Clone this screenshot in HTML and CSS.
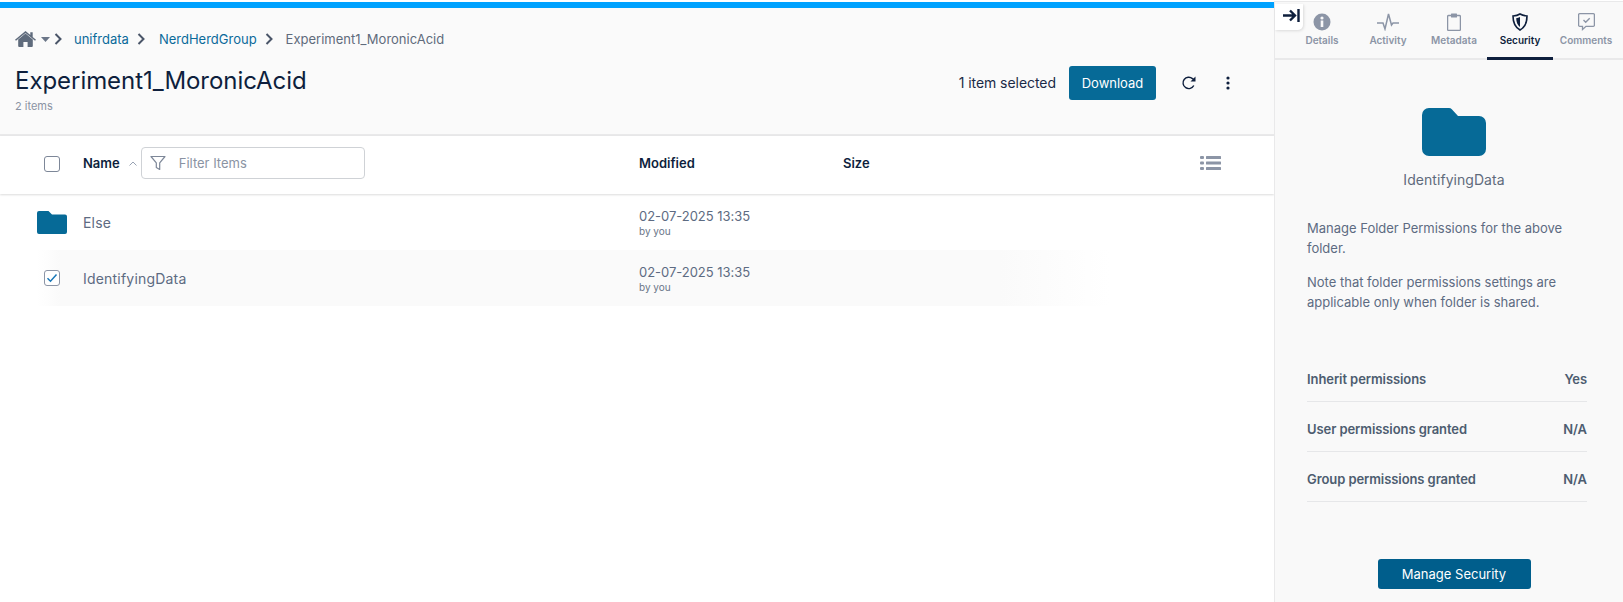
FILE: index.html
```html
<!DOCTYPE html>
<html lang="en">
<head>
<meta charset="utf-8">
<title>Experiment1_MoronicAcid</title>
<link rel="stylesheet" href="styles.css">
</head>
<body>
<div class="app">
  <main class="main">
    <div class="progress"></div>
    <header class="header">
      <nav class="crumbs">
        <svg class="home" width="21" height="17" viewBox="0 0 21 17"><path fill="#5f6b7c" d="M10.5 2.4 3.2 8.6V15a1 1 0 0 0 1 1h4.2v-5h4.2v5h4.2a1 1 0 0 0 1-1V8.6z"/><path fill="#5f6b7c" d="M10.5 0 0 8.7l1 1.1 9.5-7.800 9.5 7.800 1-1.100-3.300-2.800V1.200h-2.400v2.700z"/></svg>
        <svg class="caret" width="9" height="5" viewBox="0 0 9 5"><path fill="#6b7688" d="M0 0h9L4.500 5z"/></svg>
        <svg class="chev first" width="8" height="12" viewBox="0 0 8 12"><path fill="none" stroke="#4a5568" stroke-width="2" d="m1.500 1 5 5-5 5"/></svg>
        <a class="crumb-link">unifrdata</a>
        <svg class="chev" width="8" height="12" viewBox="0 0 8 12"><path fill="none" stroke="#4a5568" stroke-width="2" d="m1.500 1 5 5-5 5"/></svg>
        <a class="crumb-link">NerdHerdGroup</a>
        <svg class="chev" width="8" height="12" viewBox="0 0 8 12"><path fill="none" stroke="#4a5568" stroke-width="2" d="m1.500 1 5 5-5 5"/></svg>
        <span class="crumb-current">Experiment1_MoronicAcid</span>
      </nav>
      <div class="title-row">
        <div>
          <h1 class="title">Experiment1_MoronicAcid</h1>
          <div class="count">2 items</div>
        </div>
        <div class="actions">
          <span class="selected">1 item selected</span>
          <button class="btn btn-download">Download</button>
          <svg class="refresh" width="16" height="16" viewBox="0 0 16 16"><path fill="none" stroke="#0e1f3d" stroke-width="1.400" d="M12.800 10.500A5.700 5.700 0 1 1 11.500 3.600L13.500 5"/><path fill="#0e1f3d" d="M14.500 1.500v5h-5z"/></svg>
          <svg class="kebab" width="4" height="14" viewBox="0 0 4 14"><circle cx="2" cy="2" r="1.600" fill="#0e1f3d"/><circle cx="2" cy="7" r="1.600" fill="#0e1f3d"/><circle cx="2" cy="12" r="1.600" fill="#0e1f3d"/></svg>
        </div>
      </div>
    </header>
    <div class="table-head grid">
      <div class="cell-check"><span class="checkbox head-box"></span></div>
      <div class="cell-name">
        <span class="th">Name</span>
        <svg class="sort" width="8" height="5" viewBox="0 0 8 5"><path fill="none" stroke="#98a2b3" stroke-width="1" d="m.5 4.500 3.500-3.500 3.500 3.500"/></svg>
        <label class="filter">
          <svg width="16" height="16" viewBox="0 0 16 16"><path fill="none" stroke="#7d8798" stroke-width="1.200" d="M1 1.500h14L9.700 7.800v6.700l-3.400-2V7.800z" stroke-linejoin="round"/></svg>
          <span class="filter-text">Filter Items</span>
        </label>
      </div>
      <div class="th">Modified</div>
      <div class="th">Size</div>
      <svg class="list-toggle" width="21" height="16" viewBox="0 0 21 16"><g fill="#8c95a6"><rect x="0" y="1" width="4" height="3" rx="1"/><rect x="0" y="6.500" width="4" height="3" rx="1"/><rect x="0" y="12" width="4" height="3" rx="1"/><rect x="6" y="1" width="15" height="3" rx=".5"/><rect x="6" y="6.500" width="15" height="3" rx=".5"/><rect x="6" y="12" width="15" height="3" rx=".5"/></g></svg>
    </div>
    <div class="row grid">
      <div class="cell-check folder-cell"><svg width="30" height="23" viewBox="0 0 30 23"><path fill="#066a97" d="M2 0h9.500l3.500 3.500h13a2 2 0 0 1 2 2V21a2 2 0 0 1-2 2H2a2 2 0 0 1-2-2V2a2 2 0 0 1 2-2z"/></svg></div>
      <div class="item-name">Else</div>
      <div class="modified"><div class="date">02-07-2025 13:35</div><div class="by">by you</div></div>
    </div>
    <div class="row grid row-selected">
      <div class="cell-check"><span class="checkbox checked"><svg width="12" height="10" viewBox="0 0 12 10"><path fill="none" stroke="#1877b8" stroke-width="1.500" d="m1.500 5.200 3 3 6-6.700"/></svg></span></div>
      <div class="item-name">IdentifyingData</div>
      <div class="modified"><div class="date">02-07-2025 13:35</div><div class="by">by you</div></div>
    </div>
  </main>
  <aside class="panel">
    <button class="collapse"><svg width="17" height="13" viewBox="0 0 17 13"><path fill="none" stroke="#0e1f3d" stroke-width="2.400" d="M0 6.500h11M7 1.500l5 5-5 5M15.500 0v13"/></svg></button>
    <div class="tabs">
      <div class="tab">
        <svg width="18" height="18" viewBox="0 0 18 18"><circle cx="9" cy="9" r="8.500" fill="#8c95a6"/><rect x="7.700" y="7.500" width="2.600" height="6.500" fill="#f8f8f9"/><circle cx="9" cy="5" r="1.600" fill="#f8f8f9"/></svg>
        <span>Details</span>
      </div>
      <div class="tab">
        <svg width="22" height="18" viewBox="0 0 22 18"><path fill="none" stroke="#8c95a6" stroke-width="1.500" d="M0 10h6l2 6 3.500-15 3 11 1.500-2h6"/></svg>
        <span>Activity</span>
      </div>
      <div class="tab">
        <svg width="14" height="18" viewBox="0 0 14 18"><path fill="none" stroke="#8c95a6" stroke-width="1.300" d="M4 2.500H1.600a1 1 0 0 0-1 1v12.900a1 1 0 0 0 1 1h10.800a1 1 0 0 0 1-1V3.500a1 1 0 0 0-1-1H10"/><rect x="4" y=".5" width="6" height="4" rx=".5" fill="#8c95a6"/></svg>
        <span>Metadata</span>
      </div>
      <div class="tab active">
        <svg width="16" height="18" viewBox="0 0 16 18"><path fill="none" stroke="#0e1f3d" stroke-width="1.600" d="M8 1c2 1.200 4.500 1.800 7 2 0 6-1.500 11-7 14C2.500 14 1 9 1 3c2.500-.2 5-.8 7-2z"/><path fill="#0e1f3d" d="M8 4c1.200.6 2.500 1 3.800 1.200-.1 3.600-1 6.700-3.800 8.800z" transform="matrix(-1 0 0 1 16 0)"/></svg>
        <span>Security</span>
      </div>
      <div class="tab">
        <svg width="17" height="18" viewBox="0 0 17 18"><path fill="none" stroke="#8c95a6" stroke-width="1.300" d="M1.600.7h13.800a1 1 0 0 1 1 1v10.600a1 1 0 0 1-1 1H8L4.500 16.500v-3.200H1.600a1 1 0 0 1-1-1V1.700a1 1 0 0 1 1-1z"/><path fill="none" stroke="#8c95a6" stroke-width="1.400" d="m5.500 7 2.200 2.200 4-4"/></svg>
        <span>Comments</span>
      </div>
    </div>
    <div class="panel-body">
      <div class="folder-summary">
        <svg width="64" height="48" viewBox="0 0 64 48"><path fill="#066a97" d="M7 0h20a4 4 0 0 1 2.800 1.200L36 8h21a7 7 0 0 1 7 7v26a7 7 0 0 1-7 7H7a7 7 0 0 1-7-7V7a7 7 0 0 1 7-7z"/></svg>
        <div class="folder-name">IdentifyingData</div>
      </div>
      <p class="note">Manage Folder Permissions for the above folder.</p>
      <p class="note">Note that folder permissions settings are applicable only when folder is shared.</p>
      <dl class="props">
        <div class="prop"><dt>Inherit permissions</dt><dd>Yes</dd></div>
        <div class="prop"><dt>User permissions granted</dt><dd>N/A</dd></div>
        <div class="prop"><dt>Group permissions granted</dt><dd>N/A</dd></div>
      </dl>
      <div class="panel-action"><button class="btn btn-manage">Manage Security</button></div>
    </div>
  </aside>
</div>
</body>
</html>
```

FILE: styles.css
```css
* { box-sizing: border-box; }
html, body { margin: 0; height: 100%; overflow: hidden; }
body { font-family: Inter, "Liberation Sans", sans-serif; background: #fff; color: #0e1f3d; }
.app { display: flex; height: 602px; padding-top: 2px; }
.main { flex: 1; min-width: 0; display: flex; flex-direction: column; }
.progress { height: 6px; background: #00a2ff; }
.header { height: 128px; background: #fafafa; border-bottom: 2px solid #e9e9ea; padding: 22px 0 0 15px; }
.crumbs { display: flex; align-items: center; height: 18px; font-size: 13px; }
.caret { margin-left: 5px; }
.chev { margin: 0 14px 0 8px; }
.chev.first { margin: 0 12px 0 4px; }
.crumb-link { color: #0b6a9a; }
.crumb-current { color: #5f6b7c; margin-left: -1px; }
.title-row { display: flex; justify-content: space-between; margin-top: 16px; padding-right: 44px; }
.title { margin: 0; font-weight: 400; font-size: 24px; letter-spacing: -.05px; line-height: 34px; color: #0e1f3d; }
.count { font-size: 11px; color: #8a93a3; line-height: 14px; margin-top: 1px; }
.actions { display: flex; align-items: center; height: 34px; margin-top: 2px; }
.selected { font-size: 14px; letter-spacing: -.05px; color: #1a2a47; padding-bottom: 2px; }
.btn { border: 0; border-radius: 3px; color: #fff; font-family: inherit; font-size: 13px; padding: 0; }
.btn-download { width: 87px; height: 34px; background: #066a97; margin-left: 13px; }
.refresh { margin-left: 25px; }
.kebab { margin-left: 29px; }
.grid { display: grid; grid-template-columns: 83px 556px 204px 1fr auto; align-items: center; }
.table-head { height: 58px; box-shadow: 0 1px 2px rgba(0,0,0,.14); position: relative; padding: 0 53px 4px 0; }
.cell-check { display: flex; justify-content: center; padding-left: 30px; padding-right: 9px; }
.checkbox { width: 16px; height: 16px; border: 1px solid #7d8798; border-radius: 3px; background: #fff; display: flex; align-items: center; justify-content: center; }
.head-box { margin-top: 2px; }
.checked { border-color: #8c95a6; }
.cell-name { display: flex; align-items: center; }
.th { font-size: 13px; font-weight: 600; color: #0e1f3d; }
.sort { margin-left: 9px; }
.filter { width: 224px; height: 32px; margin-left: 4px; border: 1px solid #cfd2d6; border-radius: 4px; display: flex; align-items: center; padding: 0 0 0 8px; background: #fff; }
.filter-text { font-size: 13px; color: #8a93a3; margin-left: 13px; }
.row { height: 56px; }
.row-selected { background: linear-gradient(90deg, #fff 37px, #fafafa 60px, #fafafa 1000px, #fff 1110px); }
.folder-cell { padding: 0 0 0 37px; justify-content: flex-start; }
.item-name { font-size: 14px; letter-spacing: .2px; color: #5d6b82; }
.date { font-size: 13px; letter-spacing: -.03px; color: #5d6b82; line-height: 17px; padding-top: 1px; }
.by { font-size: 10px; color: #6b7688; line-height: 12px; }
.panel { width: 349px; flex: none; background: #f9f9f9; border-left: 1px solid #e9e9ea; border-top: 1px solid #e9e9ea; margin-top: -1px; position: relative; display: flex; flex-direction: column; }
.collapse { position: absolute; left: 0; top: 2px; width: 28px; height: 26px; padding: 0 0 4px 4px; border: 0; border-radius: 0 0 5px 0; background: #fff; box-shadow: 1px 1px 3px rgba(0,0,0,.12); display: flex; align-items: center; justify-content: center; }
.tabs { height: 58px; display: grid; grid-template-columns: repeat(5, 66px); padding-left: 14px; border-bottom: 2px solid #e9e9ea; }
.tab { display: flex; flex-direction: column; align-items: center; gap: 3px; padding-top: 11px; font-size: 10px; font-weight: 600; color: #8c95a6; height: 58px; white-space: nowrap; }
.tab svg { height: 18px; flex: none; }
.tab.active { color: #0e1f3d; border-bottom: 3px solid #0e1f3d; }
.panel-body { flex: 1; padding: 48px 36px 0 32px; display: flex; flex-direction: column; }
.folder-summary { display: flex; flex-direction: column; align-items: center; padding-left: 14px; }
.folder-name { font-size: 14px; letter-spacing: .05px; color: #5f6b7c; margin-top: 15px; line-height: 17px; }
.note { margin: 0 0 14px; font-size: 13px; line-height: 20px; color: #5d6b82; }
.folder-summary + .note { margin-top: 30px; }
.props { margin: 26px 0 0; }
.prop { display: flex; justify-content: space-between; align-items: center; height: 50px; padding-top: 4px; border-bottom: 1px solid #e6e7e9; font-size: 13px; font-weight: 600; letter-spacing: -.08px; color: #4d5d70; }
.prop dd { margin: 0; }
.panel-action { display: flex; justify-content: center; margin-top: 57px; padding-left: 14px; }
.btn-manage { width: 153px; height: 30px; background: #005e8c; }
```
